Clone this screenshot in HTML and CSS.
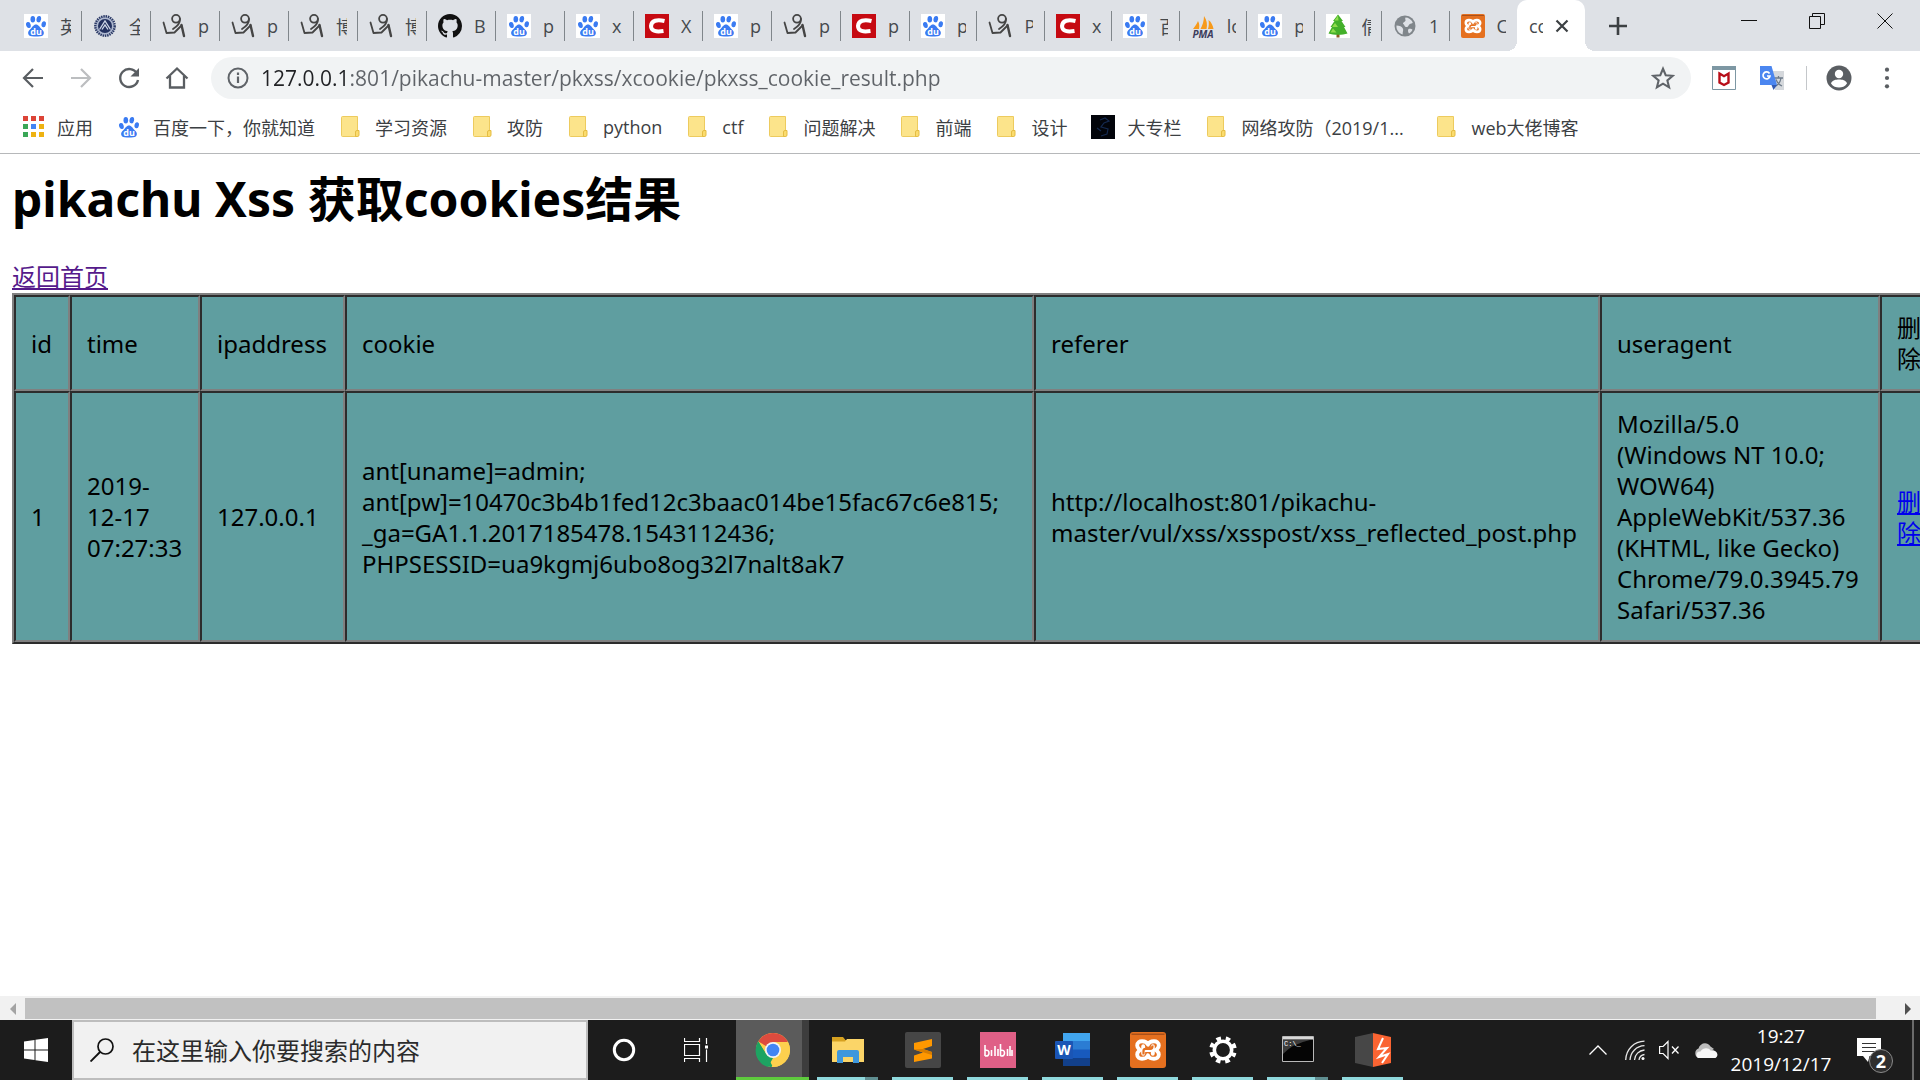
FILE: index.html
```html
<!DOCTYPE html>
<html lang="zh-CN">
<head>
<meta charset="utf-8">
<title>cookie搜集结果</title>
<link rel="stylesheet" href="styles.css">
</head>
<body>
<svg class="sprite" aria-hidden="true">
  <symbol id="paw" viewBox="0 0 24 24">
    <g fill="#3a7bf2">
      <ellipse cx="4.4" cy="11" rx="2.3" ry="3.1" transform="rotate(-15 4.4 11)"/>
      <ellipse cx="8.8" cy="5.2" rx="2.3" ry="3.2"/>
      <ellipse cx="14.8" cy="5.2" rx="2.3" ry="3.2" transform="rotate(10 14.800 5.200)"/>
      <ellipse cx="19.700" cy="10.300" rx="2.200" ry="3" transform="rotate(12 19.700 10.300)"/>
      <path d="M12 10.500c2.600 0 3.400 2.500 5.200 4.200 2 1.800 3.200 3.200 2.500 5.400-.7 2.300-3 2.600-7.700 2.400-4.700.2-7-.1-7.700-2.400-.7-2.200.5-3.600 2.500-5.400 1.800-1.700 2.600-4.200 5.200-4.200z"/>
    </g>
    <text x="12" y="20.500" text-anchor="middle" font-family="Open Sans, sans-serif" font-weight="700" font-size="9" fill="#fff">du</text>
  </symbol>
  <symbol id="cnblogs" viewBox="0 0 24 24">
    <g fill="none" stroke="#454545" stroke-width="1.800" stroke-linecap="round" stroke-linejoin="round">
      <circle cx="14" cy="4.800" r="3.900"/>
      <path d="M18 5c.2 4.500-3 7.500-7 10"/>
      <path d="M1.500 8.500l3 10.500 8-.5 7-7"/>
      <path stroke-width="2.400" d="M19.500 11l2.500 11"/>
    </g>
  </symbol>
  <symbol id="emblem" viewBox="0 0 24 24">
    <circle cx="12" cy="12" r="9.700" fill="#aeb8cf" stroke="#2b3a67" stroke-width="2.400" stroke-dasharray="1.500 .8"/>
    <circle cx="12" cy="12" r="7" fill="#22305f"/>
    <path d="M6.500 15.500L12 7l5.500 8.500M9 15.500l3-4.500 3 4.500" fill="none" stroke="#cfd7e8" stroke-width="1.300"/>
  </symbol>
  <symbol id="github" viewBox="0 0 16 16">
    <path fill="#111" d="M8 0C3.580 0 0 3.580 0 8c0 3.540 2.290 6.530 5.470 7.590.4.070.55-.17.55-.38 0-.19-.01-.82-.01-1.490-2.010.37-2.530-.49-2.690-.94-.09-.23-.48-.94-.82-1.130-.28-.15-.68-.52-.01-.53.63-.01 1.080.58 1.230.82.72 1.210 1.870.87 2.330.66.07-.52.28-.87.51-1.070-1.780-.2-3.640-.89-3.640-3.950 0-.87.31-1.590.82-2.150-.08-.2-.36-1.020.08-2.120 0 0 .67-.21 2.200.82.64-.18 1.320-.27 2-.27s1.360.09 2 .27c1.530-1.040 2.200-.82 2.200-.82.44 1.100.16 1.920.08 2.120.51.56.82 1.270.82 2.150 0 3.070-1.870 3.750-3.650 3.950.29.25.54.73.54 1.480 0 1.070-.01 1.930-.01 2.200 0 .21.15.46.55.38A8.010 8.010 0 0 0 16 8c0-4.420-3.580-8-8-8z"/>
  </symbol>
  <symbol id="csdn" viewBox="0 0 24 24">
    <path fill="#c60a12" d="M0 0h24v24H0z"/>
    <path d="M19.500 7C12 5.200 6.500 6.500 6 12c0 5.500 5.500 6 12.500 5" fill="none" stroke="#fff" stroke-width="4"/>
  </symbol>
  <symbol id="pma" viewBox="0 0 24 24">
    <path fill="#f79a1b" d="M2 15c2-3 4-5 5-8 1.500 3 1.500 5 1 8zM9.500 15c2-4 3.500-8 3.500-13 3 4 3.500 9 2.500 13zM17 15c1-3 1-6 .5-9 3 2 4.500 6 5 9z"/>
    <text x="12" y="23.500" text-anchor="middle" font-family="Open Sans, sans-serif" font-weight="700" font-style="italic" font-size="10" fill="#3c3c5c">PMA</text>
  </symbol>
  <symbol id="tree" viewBox="0 0 24 24">
    <path fill="#fff" d="M0 0h24v24H0z"/>
    <path fill="#8a5a1e" d="M10.500 17h3v6.500h-3z"/>
    <path fill="#43b02a" d="M12 .5L7 7h1.500L4.500 13H6l-3.500 6.500c5 1.800 14 1.800 19 0L18 13h1.500l-4-6H17z"/>
    <path fill="#8fdc4e" d="M12 1.500L8.500 6.500h4zM9 9l-3 4h6zM7 14.500L4.500 18.500h6z"/>
  </symbol>
  <symbol id="globe" viewBox="0 0 24 24">
    <circle cx="12" cy="12" r="10.500" fill="#80868b"/>
    <path fill="#dee1e6" d="M3.500 11.500c3 .2 5.500 1 6.500 3.200.6 1.500-.5 3-.3 5.800C6 19.500 3 16 3.500 11.500zM12.500 3.500c3 0 6 2 7.300 5-.8 1.500-2 .6-3.300 1.800-1.200 1-.8 2.700-3 2.700-2.500 0-1.500-2.500-3.500-3-.2-2 2-2 2.500-3.300.3-1-.8-2 0-3.200zM15.500 15c1.700-.5 3.200 0 4 .8-.8 1.800-2 3-3.500 3.700-.8-1.200-1.500-3-.5-4.500z"/>
  </symbol>
  <symbol id="xampp" viewBox="0 0 24 24">
    <rect width="24" height="24" rx="2" fill="#e5701f"/>
    <path d="M1 1.500h22" stroke="#a9501a" stroke-width="1"/>
    <path d="M12 8.500C11 5.500 4.800 5 4.800 9c0 2 1.700 2.300 1.700 3s-1.700 1-1.700 3c0 4 6.200 3.500 7.200.5 1 3 7.200 3.500 7.200-.5 0-2-1.700-2.300-1.700-3s1.700-1 1.700-3c0-4-6.200-3.500-7.200-.5zM8.800 9.500v5M15.200 9.500v5M9 12h6" fill="none" stroke="#fff" stroke-width="2.600" stroke-linecap="round" stroke-linejoin="round"/>
    <path d="M9 15v-2.500q0-1.200 1.500-1.200h3Q15 11.300 15 9" fill="none" stroke="#e5701f" stroke-width="1.500"/>
  </symbol>
  <symbol id="folder" viewBox="0 0 24 24">
    <path d="M3.500 1.500h15v20h-15q-1 0-1-1v-18q0-1 1-1z" fill="#fce48b" stroke="#edcb5e"/>
    <path d="M16.500 21.500v-4.500q0-1.500 1.500-1.500h2v4.500q0 1.500-1.500 1.500z" fill="#fbdc6e" stroke="#e5bd43"/>
  </symbol>
</svg>

<header class="browser">
  <div class="tabstrip">
    <nav class="tabs" aria-label="标签页">
      <a class="tab" href="#"><svg class="fav plate"><use href="#paw"/></svg><span>英</span></a>
      <a class="tab" href="#"><svg class="fav"><use href="#emblem"/></svg><span>全</span></a>
      <a class="tab" href="#"><svg class="fav"><use href="#cnblogs"/></svg><span>p</span></a>
      <a class="tab" href="#"><svg class="fav"><use href="#cnblogs"/></svg><span>p</span></a>
      <a class="tab" href="#"><svg class="fav"><use href="#cnblogs"/></svg><span>博</span></a>
      <a class="tab" href="#"><svg class="fav"><use href="#cnblogs"/></svg><span>博</span></a>
      <a class="tab" href="#"><svg class="fav"><use href="#github"/></svg><span>B</span></a>
      <a class="tab" href="#"><svg class="fav plate"><use href="#paw"/></svg><span>p</span></a>
      <a class="tab" href="#"><svg class="fav plate"><use href="#paw"/></svg><span>x</span></a>
      <a class="tab" href="#"><svg class="fav"><use href="#csdn"/></svg><span>X</span></a>
      <a class="tab" href="#"><svg class="fav plate"><use href="#paw"/></svg><span>p</span></a>
      <a class="tab" href="#"><svg class="fav"><use href="#cnblogs"/></svg><span>p</span></a>
      <a class="tab" href="#"><svg class="fav"><use href="#csdn"/></svg><span>p</span></a>
    </nav>
    <nav class="tabs tabs-narrow" aria-label="更多标签页">
      <a class="tab" href="#"><svg class="fav plate"><use href="#paw"/></svg><span>p</span></a>
      <a class="tab" href="#"><svg class="fav"><use href="#cnblogs"/></svg><span>P</span></a>
      <a class="tab" href="#"><svg class="fav"><use href="#csdn"/></svg><span>x</span></a>
      <a class="tab" href="#"><svg class="fav plate"><use href="#paw"/></svg><span>百</span></a>
      <a class="tab" href="#"><svg class="fav"><use href="#pma"/></svg><span>lo</span></a>
      <a class="tab" href="#"><svg class="fav plate"><use href="#paw"/></svg><span>p</span></a>
      <a class="tab" href="#"><svg class="fav"><use href="#tree"/></svg><span>倩</span></a>
      <a class="tab" href="#"><svg class="fav"><use href="#globe"/></svg><span>1</span></a>
      <a class="tab" href="#"><svg class="fav"><use href="#xampp"/></svg><span>C</span></a>
    </nav>
    <div class="tab-active"><span>co</span>
      <button class="tab-close" aria-label="关闭标签页"><svg viewBox="0 0 14 14"><path d="M1.500 1.500l11 11M12.500 1.500l-11 11" stroke="#3c4043" stroke-width="2.200"/></svg></button>
    </div>
    <button class="tab-new" aria-label="新标签页"><svg viewBox="0 0 18 18"><path d="M9 0v18M0 9h18" stroke="#3c4043" stroke-width="2.600"/></svg></button>
    <div class="window-buttons">
      <button aria-label="最小化"><svg viewBox="0 0 16 16"><path d="M0 7.500h16" stroke="#111"/></svg></button>
      <button aria-label="还原"><svg viewBox="0 0 16 16"><path d="M.5 3.500h11v12H.5zM3.500 3.500V.5h12v11h-4" fill="none" stroke="#111"/></svg></button>
      <button aria-label="关闭"><svg viewBox="0 0 16 16"><path d="M.5.5l15 15M15.500.5l-15 15" stroke="#111"/></svg></button>
    </div>
  </div>

  <div class="toolbar">
    <button class="tool" aria-label="后退"><svg viewBox="0 0 24 24"><path d="M22 12H3M12 3l-9 9 9 9" fill="none" stroke="#5a5e62" stroke-width="2.200"/></svg></button>
    <button class="tool" aria-label="前进"><svg viewBox="0 0 24 24"><path d="M2 12h19M12 3l9 9-9 9" fill="none" stroke="#bcbec0" stroke-width="2.200"/></svg></button>
    <button class="tool" aria-label="重新加载"><svg viewBox="0 0 24 24"><path d="M20 7.500a9 9 0 1 0 1 6.500" fill="none" stroke="#5a5e62" stroke-width="2.400"/><path d="M22 2v8.500h-8.500z" fill="#5a5e62"/></svg></button>
    <button class="tool" aria-label="主页"><svg viewBox="0 0 24 24"><path d="M1.500 12.500L12 2.500l10.500 10M5 10v11.500h14V10" fill="none" stroke="#5a5e62" stroke-width="2.300"/></svg></button>
    <div class="omnibox">
      <svg class="info" viewBox="0 0 22 22"><circle cx="11" cy="11" r="9.500" fill="none" stroke="#5f6368" stroke-width="2"/><path d="M11 9.500V16M11 5.500V8" stroke="#5f6368" stroke-width="2.200"/></svg>
      <input class="url" type="text" aria-label="地址栏" value="127.0.0.1:801/pikachu-master/pkxss/xcookie/pkxss_cookie_result.php">
      <button class="star" aria-label="收藏"><svg viewBox="0 0 22 22"><path d="M11 2.500l2.500 6 6.500.5-5 4.200 1.600 6.400L11 16.200l-5.600 3.400L7 13.200 2 9l6.500-.5z" fill="none" stroke="#5f6368" stroke-width="1.900"/></svg></button>
    </div>
    <div class="extensions">
      <button aria-label="McAfee"><svg viewBox="0 0 24 24"><path d="M.5.500h23v23H.5z" fill="#fff" stroke="#7d97a3"/><path d="M0 0h24v4H0z" fill="#7d97a3"/><path d="M7.500 7.500l4.500 2.700 4.500-2.700v9L12 19l-4.500-2.500z" fill="none" stroke="#b80d18" stroke-width="2.400"/></svg></button>
      <button aria-label="谷歌翻译"><svg viewBox="0 0 24 24"><path d="M10 5h14v19H15z" fill="#d5d8dc"/><path d="M14 12h9M18.500 10v2M16 20c3-2 4.500-4 5-8M16 13.500c1 3 3 5 6 6.500" fill="none" stroke="#6c7a89" stroke-width="1.300"/><path d="M0 0h11.500l5.500 19H0z" fill="#4b86f0"/><path d="M11.500 19H17l-3.500 5z" fill="#3259b0"/><path d="M9.500 7.500A3.500 3.500 0 1 0 10 10H7" fill="none" stroke="#fff" stroke-width="1.700"/></svg></button>
    </div>
    <div class="profile">
      <button aria-label="用户"><svg viewBox="0 0 26 26"><circle cx="13" cy="13" r="12.500" fill="#5a5e62"/><circle cx="13" cy="9" r="4.200" fill="#fff"/><path d="M5 18.500c1-3.500 5-4 8-4s7 .5 8 4c-2 3-5 4-8 4s-6-1-8-4z" fill="#fff"/></svg></button>
      <button aria-label="菜单"><svg viewBox="0 0 26 26"><g fill="#5a5e62"><circle cx="13" cy="4" r="2.300"/><circle cx="13" cy="13" r="2.300"/><circle cx="13" cy="22" r="2.300"/></g></svg></button>
    </div>
  </div>

  <nav class="bookmarks" aria-label="书签">
    <a href="#"><svg viewBox="0 0 24 24"><g fill="#dc4437"><path d="M2 1h5v5H2zM10 1h5v5h-5zM18 1h5v5h-5z"/></g><path fill="#3aa757" d="M2 9h5v5H2zM2 17h5v5H2z"/><path fill="#4285f4" d="M10 9h5v5h-5z"/><path fill="#eeb211" d="M18 9h5v5h-5zM10 17h5v5h-5zM18 17h5v5h-5z"/></svg>应用</a>
    <a href="#"><svg><use href="#paw"/></svg>百度一下，你就知道</a>
    <a href="#"><svg><use href="#folder"/></svg>学习资源</a>
    <a href="#"><svg><use href="#folder"/></svg>攻防</a>
    <a href="#"><svg><use href="#folder"/></svg>python</a>
    <a href="#"><svg><use href="#folder"/></svg>ctf</a>
    <a href="#"><svg><use href="#folder"/></svg>问题解决</a>
    <a href="#"><svg><use href="#folder"/></svg>前端</a>
    <a href="#"><svg><use href="#folder"/></svg>设计</a>
    <a href="#"><svg viewBox="0 0 24 24"><path fill="#02040a" d="M0 0h24v24H0z"/><path d="M9 5l5-2 4 3-5 2-3 4 7 2-1 5-6 2M6 13l4 3" fill="none" stroke="#14294f" stroke-width="1.200"/></svg>大专栏</a>
    <a class="long" href="#"><svg><use href="#folder"/></svg>网络攻防（2019/1...</a>
    <a href="#"><svg><use href="#folder"/></svg>web大佬博客</a>
  </nav>
</header>

<main class="page">
  <h1>pikachu Xss 获取cookies结果</h1>
  <a class="home" href="#">返回首页</a>
  <table class="results">
    <colgroup><col class="c-id"><col class="c-time"><col class="c-ip"><col class="c-cookie"><col class="c-ref"><col class="c-ua"><col class="c-del"></colgroup>
    <thead>
      <tr><th>id</th><th>time</th><th>ipaddress</th><th>cookie</th><th>referer</th><th>useragent</th><th>删<br>除</th></tr>
    </thead>
    <tbody>
      <tr>
        <td>1</td>
        <td>2019-<br>12-17<br>07:27:33</td>
        <td>127.0.0.1</td>
        <td>ant[uname]=admin;<br>ant[pw]=10470c3b4b1fed12c3baac014be15fac67c6e815;<br>_ga=GA1.1.2017185478.1543112436;<br>PHPSESSID=ua9kgmj6ubo8og32l7nalt8ak7</td>
        <td>http://localhost:801/pikachu-<br>master/vul/xss/xsspost/xss_reflected_post.php</td>
        <td>Mozilla/5.0<br>(Windows NT 10.0;<br>WOW64)<br>AppleWebKit/537.36<br>(KHTML, like Gecko)<br>Chrome/79.0.3945.79<br>Safari/537.36</td>
        <td><a href="#">删<br>除</a></td>
      </tr>
    </tbody>
  </table>
</main>

<div class="scrollbar">
  <button aria-label="向左滚动"><svg viewBox="0 0 8 12"><path d="M7 0v12L1 6z" fill="#a3a3a3"/></svg></button>
  <div class="track"><div class="thumb"></div></div>
  <button aria-label="向右滚动"><svg viewBox="0 0 8 12"><path d="M1 0v12l6-6z" fill="#505050"/></svg></button>
</div>

<footer class="taskbar">
  <button class="start" aria-label="开始"><svg viewBox="0 0 24 24"><path fill="#fff" d="M0 3.500L10.500 2v9.500H0zM11.500 1.800L24 0v11.500H11.500zM0 12.500h10.500V22L0 20.500zM11.500 12.500H24V24l-12.500-1.800z"/></svg></button>
  <label class="search">
    <svg viewBox="0 0 24 24"><circle cx="15.500" cy="8.500" r="7.500" fill="none" stroke="#111" stroke-width="1.700"/><path d="M10.300 13.800L.5 23.500" stroke="#111" stroke-width="1.900"/></svg>
    <input type="text" placeholder="在这里输入你要搜索的内容" aria-label="搜索">
  </label>
  <button class="sys" aria-label="Cortana"><svg viewBox="0 0 24 24"><circle cx="12" cy="12" r="9.700" fill="none" stroke="#fff" stroke-width="3"/></svg></button>
  <button class="sys" aria-label="任务视图"><svg viewBox="0 0 24 24"><path d="M.5 0v3.500h15V0M.5 24v-3.500h15V24M.5 6.500h15v11H.5zM22.500 0v6M22.500 11.500V24" fill="none" stroke="#fff" stroke-width="1.200"/><path d="M21 7.500h3v3h-3z" fill="#fff"/></svg></button>
  <div class="apps">
    <button class="app current" aria-label="Chrome"><svg viewBox="0 0 36 36"><circle cx="18" cy="18" r="17" fill="#fdd04e"/><path d="M18 18L3.300 9.500A17 17 0 0 1 32.700 9.500z" fill="#dd4b3e"/><path d="M3.300 9.500L11.100 22 18 35A17 17 0 0 1 3.300 9.500z" fill="#1da462"/><path d="M18 10h15a17 17 0 0 1-15 25l7-13z" fill="#fdd04e"/><path d="M11 22l7 4-5 9A17 17 0 0 1 3.300 9.500z" fill="#1da462"/><path d="M16.500 35l7-12h1.500L19 35z" fill="#fdd04e"/><circle cx="18" cy="18" r="8" fill="#f4f4f4"/><circle cx="18" cy="18" r="6.300" fill="#4285f4"/></svg></button>
    <button class="app stacked" aria-label="文件资源管理器"><svg viewBox="0 0 36 36"><path d="M2 5h11l2.500 3H34v5H2z" fill="#d6a120"/><path d="M2 9.500h13L17 7h17v23H2z" fill="#fbd568"/><path d="M7 31V20q0-2 2-2h18q2 0 2 2v11h-6v-6h-10v6z" fill="#3f97dc"/></svg></button>
    <button class="app" aria-label="Sublime Text"><svg viewBox="0 0 36 36"><rect width="36" height="36" rx="2" fill="#464646"/><path d="M27 7v7l-9 3 9 3v6.500L9 30v-6.500l9-3-9-3V11z" fill="#ff9800"/><path d="M9 17.500l9-.5 9 3v3z" fill="#d87d00"/></svg></button>
    <button class="app" aria-label="bilibili"><svg viewBox="0 0 36 36"><path d="M0 0h36v36H0z" fill="#df5f86"/><path d="M5 13v11M5 18.500q4-1 4 2.500T5 24M11.500 18v6M15 14v10M18 17v7M20.500 12v12M20.500 18.500q4-1 4 2.500t-4 3M27.500 17v7M30 14v10M32 18v6" fill="none" stroke="#fff" stroke-width="1.600"/></svg></button>
    <button class="app" aria-label="Word"><svg viewBox="0 0 36 36"><path d="M8 1h27v9H8z" fill="#41a5ee"/><path d="M8 9h27v9H8z" fill="#2b7cd3"/><path d="M8 17.500h27V26H8z" fill="#185abd"/><path d="M8 26h27v8H8z" fill="#12408a"/><rect y="9" width="18" height="18" rx="1" fill="#1a55b5"/><text x="9" y="23" text-anchor="middle" font-family="Open Sans, sans-serif" font-weight="700" font-size="14" fill="#fff">W</text></svg></button>
    <button class="app" aria-label="XAMPP"><svg><use href="#xampp"/></svg></button>
    <button class="app" aria-label="设置"><svg viewBox="0 0 36 36"><circle cx="18" cy="18" r="8.700" fill="none" stroke="#fff" stroke-width="3.600"/><circle cx="18" cy="18" r="11.800" fill="none" stroke="#fff" stroke-width="4" stroke-dasharray="4.600 4.670" stroke-dashoffset="2.300" transform="rotate(22.500 18 18)"/></svg></button>
    <button class="app stacked" aria-label="命令提示符"><svg viewBox="0 0 36 36"><path d="M2.500 4.500h31v25h-31z" fill="#050505" stroke="#b9b9b9"/><path d="M3 5h30v2.500H3z" fill="#d8d8d8"/><path d="M3 8h27Q12 12 3 22z" fill="#3c3c3c"/><text x="4" y="14" font-family="Liberation Mono, monospace" font-size="7" fill="#fff">C:\_</text></svg></button>
    <button class="app" aria-label="Burp Suite"><svg viewBox="0 0 36 36"><path d="M0 5l18-4v34L0 31z" fill="#474747"/><path d="M18 1l18 4v26l-18 4z" fill="#fa6432"/><path d="M28 6l-5 11 9-1-8 9 9-3-6 9" fill="none" stroke="#fff" stroke-width="2"/></svg></button>
  </div>
  <div class="tray">
    <button aria-label="显示隐藏的图标"><svg class="chev" viewBox="0 0 18 10"><path d="M.5 9.500L9 1l8.500 8.500" fill="none" stroke="#fff" stroke-width="1.300"/></svg></button>
    <button aria-label="网络"><svg class="wifi" viewBox="0 0 20 20"><path d="M.7 20C1 9.500 9 1.500 19.500 1.200M5 20c.5-8 6.500-14 14.500-14.300M9.500 20c.3-5.500 4.500-9.500 10-10M14 20c.3-3 2.500-5 5.500-5.500" fill="none" stroke="#e8e8e8" stroke-width="1.300"/><circle cx="18" cy="18.500" r="1.500" fill="#fff"/></svg></button>
    <button aria-label="音量"><svg class="vol" viewBox="0 0 20 20"><path d="M.6 6.500h3.500L9 1.500v17l-4.900-5H.6z" fill="none" stroke="#fff" stroke-width="1.200"/><path d="M13 6.500l6.500 7M19.500 6.500l-6.500 7" stroke="#fff" stroke-width="1.300"/></svg></button>
    <button aria-label="OneDrive"><svg class="cloud" viewBox="0 0 24 18"><path d="M5 17a5 5 0 0 1-.5-9.500C6 2 13 0 16.500 5.500L20 8z" fill="#bdbdbd"/><path d="M4 17c-3-2-1.500-7 2.500-6.500C9 6 15 6.500 16.500 9.500 22 8 26 14 21.500 17z" fill="#f7f7f7"/></svg></button>
    <button class="clock"><span>19:27</span><span>2019/12/17</span></button>
    <button class="notice" aria-label="通知"><svg viewBox="0 0 24 24"><path d="M0 0h24v18H12.500L11 24l-5-6H0z" fill="#fff"/><path d="M5 5.500h14M5 9.500h14M5 13.500h14" stroke="#333" stroke-width="1.100"/></svg><span class="badge">2</span></button>
  </div>
</footer>
</body>
</html>
```

FILE: styles.css
```css
* { box-sizing: border-box; }

body {
  margin: 0;
  height: 100vh;
  display: flex;
  flex-direction: column;
  overflow: hidden;
  background: #fff;
  color: #000;
  font-family: "Open Sans", "Noto Sans CJK SC", sans-serif;
  font-size: 18px;
}

button {
  border: 0;
  padding: 0;
  background: none;
  font: inherit;
  color: inherit;
  display: flex;
  align-items: center;
  justify-content: center;
}

input { border: 0; padding: 0; background: none; font: inherit; outline: 0; }
svg { display: block; flex: none; }
.sprite { display: none; }

/* Tab strip */
.tabstrip { display: flex; height: 51px; background: #dee1e6; padding-left: 13px; }
.tabs { display: flex; flex: 0 0 897px; }
.tabs-narrow { flex-basis: 607px; }
.tab {
  flex: 1;
  display: flex;
  align-items: center;
  gap: 12px;
  padding-left: 11px;
  height: 30px;
  margin-top: 11px;
  border-right: 1px solid #80868b;
  color: #45494d;
  text-decoration: none;
}
.tabs-narrow .tab:last-child { border-right-color: transparent; }
.tab span { width: 11px; overflow: hidden; white-space: nowrap; }
.tabs-narrow span { width: 9px; }
.fav { width: 24px; height: 24px; }
.plate { background: #fff; }

.tab-active {
  position: relative;
  flex: 0 0 68px;
  display: flex;
  align-items: center;
  gap: 12px;
  padding-left: 12px;
  background: #fff;
  border-radius: 10px 10px 0 0;
  color: #45494d;
}
.tab-active::before, .tab-active::after {
  content: "";
  position: absolute;
  bottom: 0;
  width: 10px;
  height: 10px;
}
.tab-active::before { right: 100%; background: radial-gradient(circle at 0 0, transparent 10px, #fff 10px); }
.tab-active::after { left: 100%; background: radial-gradient(circle at 100% 0, transparent 10px, #fff 10px); }
.tab-active span { width: 14px; overflow: hidden; }
.tab-close svg { width: 14px; height: 14px; }
.tab-new { width: 66px; }
.tab-new svg { width: 18px; height: 18px; }
.window-buttons { display: flex; margin-left: auto; padding-right: 1px; height: 42px; }
.window-buttons button { width: 68px; }
.window-buttons svg { width: 16px; height: 16px; }

/* Toolbar */
.toolbar { display: flex; align-items: center; height: 54px; padding-left: 9px; }
.tool { width: 48px; height: 42px; }
.tool svg { width: 24px; height: 24px; }
.omnibox {
  flex: 1;
  display: flex;
  align-items: center;
  height: 42px;
  margin-left: 10px;
  padding: 0 16px;
  border-radius: 21px;
  background: #f1f3f4;
}
.info { width: 22px; height: 22px; margin-right: 12px; }
.url {
  flex: 1;
  height: 42px;
  font-size: 21px;
  color: transparent;
  background: linear-gradient(90deg, #202124 90px, #5f6368 90px);
  background-clip: text;
  -webkit-background-clip: text;
}
.star svg { width: 24px; height: 24px; }
.extensions { display: flex; gap: 24px; padding: 0 22px 0 21px; border-right: 1px solid #c4c7ca; }
.extensions svg { width: 24px; height: 24px; }
.profile { display: flex; gap: 22px; padding: 0 20px 0 19px; }
.profile svg { width: 26px; height: 26px; }
.profile button + button svg { height: 24px; }

/* Bookmarks bar */
.bookmarks {
  display: flex;
  align-items: center;
  gap: 24px;
  height: 49px;
  padding: 0 21px 5px;
  border-bottom: 1px solid #b6b8ba;
}
.bookmarks a { display: flex; align-items: center; gap: 12px; height: 36px; color: #3c4043; text-decoration: none; white-space: nowrap; }
.bookmarks .long { width: 206px; }
.bookmarks svg { width: 24px; height: 24px; }

/* Web page */
.page {
  flex: 1;
  min-height: 0;
  overflow: hidden;
  padding: 13px 12px;
  font-family: "Noto Sans", "Noto Sans CJK SC", sans-serif;
  font-size: 24px;
}
h1 { margin: 0 0 30px; font-size: 48px; line-height: 64px; white-space: nowrap; }
.home { display: block; width: max-content; line-height: 32px; color: #551a8b; }
.results {
  width: 1928px;
  table-layout: fixed;
  border: 2px solid;
  border-color: #808080 #2c2c2c #2c2c2c #808080;
  border-spacing: 0;
  background: #5f9ea0;
}
.results th, .results td {
  padding: 15px;
  border: 2px solid;
  border-color: #2c2c2c #808080 #808080 #2c2c2c;
  font-weight: 400;
  line-height: 31px;
  text-align: left;
  vertical-align: middle;
  white-space: nowrap;
}
.results a { color: #00e; }
.c-id { width: 56px; }
.c-time { width: 130px; }
.c-ip { width: 145px; }
.c-cookie { width: 689px; }
.c-ref { width: 566px; }
.c-ua { width: 280px; }
.c-del { width: 58px; }

/* Horizontal scrollbar */
.scrollbar { display: flex; height: 24px; padding: 2px 0 1px; background: #f1f1f1; }
.scrollbar button { width: 25px; }
.scrollbar svg { width: 8px; height: 12px; }
.track { flex: 1; }
.thumb { width: 99%; height: 100%; background: #c1c1c1; }

/* Taskbar */
.taskbar { display: flex; height: 60px; background: #1c1c1c; color: #fff; }
.start { width: 72px; }
.start svg { width: 24px; height: 24px; }
.search {
  flex: 0 0 516px;
  display: flex;
  align-items: center;
  gap: 18px;
  padding-left: 16px;
  border: 2px solid #bdbdbd;
  background: #f1f1f1;
}
.search svg { width: 24px; height: 24px; }
.search input { flex: 1; height: 48px; font-size: 24px; }
.search input::placeholder { color: #2b2b2b; opacity: 1; }
.sys { width: 72px; }
.sys svg { width: 24px; height: 24px; }
.apps { display: flex; gap: 14px; margin-left: 10px; }
.app { width: 61px; height: 60px; border-bottom: 3px solid #8fd8dc; padding-top: 3px; }
.app svg { width: 36px; height: 36px; }
.app.stacked { border-image: linear-gradient(90deg, #8fd8dc 47px, #5f8e91 47px) 1; border-width: 0 0 3px; }
.app.current {
  width: 73px;
  margin: 0 -6px;
  background: linear-gradient(90deg, #5b5b5b 66px, #3d3d3d 66px);
  border-color: #5ecb3d;
}
.tray { display: flex; align-items: center; margin-left: auto; margin-right: 6px; border-right: 2px solid #6a6a6a; }
.tray button { height: 60px; }
.chev { width: 18px; height: 10px; }
.wifi { width: 20px; height: 20px; margin-left: 18px; }
.vol { width: 20px; height: 20px; margin-left: 14px; }
.cloud { width: 24px; height: 18px; margin-left: 15px; }
.tray .clock { flex-direction: column; width: 126px; font-size: 19px; line-height: 28px; }
.notice { position: relative; width: 68px; padding-right: 18px; }
.notice svg { width: 24px; height: 24px; }
.badge {
  position: absolute;
  left: 25px;
  top: 29px;
  width: 24px;
  height: 24px;
  border: 1px solid #8a8a8a;
  border-radius: 12px;
  background: #2e2e2e;
  font-size: 18px;
  font-weight: 700;
  line-height: 22px;
  text-align: center;
}
```
